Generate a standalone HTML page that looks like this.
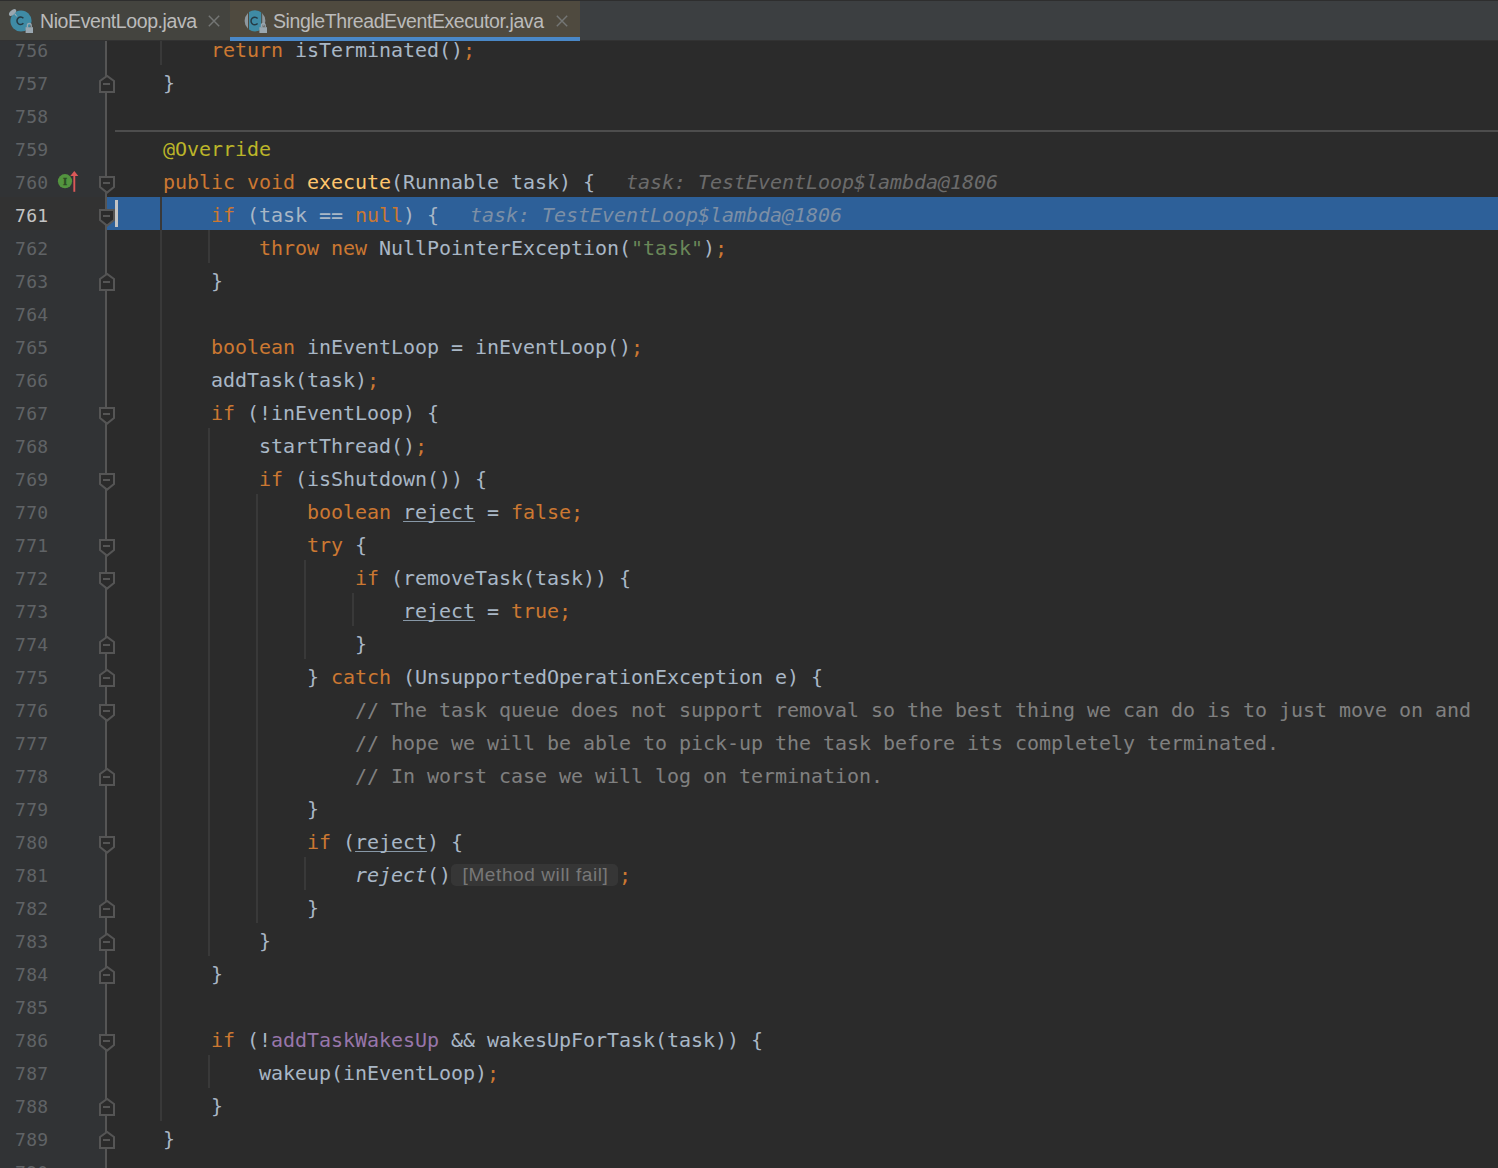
<!DOCTYPE html>
<html lang="en"><head><meta charset="utf-8"><title>SingleThreadEventExecutor.java</title>
<style>
html,body{margin:0;padding:0;}
body{width:1498px;height:1168px;overflow:hidden;background:#2b2b2b;position:relative;font-family:"DejaVu Sans Mono","Liberation Mono",monospace;}
#ed{position:absolute;left:0;top:0;width:1498px;height:1168px;overflow:hidden;}
#gutter{position:absolute;left:0;top:0;width:105px;height:1168px;background:#313335;}
#gcur{position:absolute;left:0;top:197px;width:105px;height:33px;background:#323232;}
#fline{position:absolute;left:105px;top:0;width:2px;height:1168px;background:#555555;}
#exec{position:absolute;left:107px;top:197px;width:1391px;height:33px;background:#2d6099;}
#caret{position:absolute;left:115px;top:200px;width:3px;height:27px;background:#c4c4c4;}
#sep{position:absolute;left:115px;top:130px;width:1383px;height:2px;background:#4d4d4d;}
.ln{position:absolute;left:15px;width:60px;height:33px;line-height:34px;font-size:18px;color:#606366;letter-spacing:0.3px;white-space:pre;}
.ln.cur{color:#c4c4c4;}
.r{position:absolute;height:33px;line-height:33px;font-size:20px;color:#a9b7c6;letter-spacing:-0.04px;white-space:pre;}
.k{color:#cc7832}.s{color:#6a8759}.c{color:#808080}.a{color:#bbb529}.m{color:#ffc66d}.f{color:#9876aa}
.u{text-decoration:underline;text-decoration-thickness:1px;text-underline-offset:1.5px;text-decoration-skip-ink:none;text-decoration-color:#8797a6;}
.h{color:#6b6b6b;font-style:italic;margin-left:31px;}
#r761 .h{color:#7c8fa6;}
.inl{display:inline-block;box-sizing:border-box;width:166.5px;height:21.5px;line-height:22.5px;margin:0 1.5px 0 0;padding-left:11.5px;vertical-align:baseline;background:#363636;border-radius:5px;color:#787878;font-family:"Liberation Sans","DejaVu Sans",sans-serif;font-size:19px;letter-spacing:0.6px;text-align:left;position:relative;top:-0.8px;font-style:normal;}
.g{position:absolute;width:2px;background:#393939;}
.fm{position:absolute;left:99px;width:16px;height:20px;}
#tabs{position:absolute;left:0;top:0;width:1498px;height:41px;background:#3c3f41;font-family:"Liberation Sans","DejaVu Sans",sans-serif;font-size:19.5px;color:#bbbbbb;letter-spacing:-0.41px;}
#tabs .topl{position:absolute;left:0;top:0;width:1498px;height:1px;background:#2e2e2e;}
#tabs .botl{position:absolute;left:0;top:40px;width:1498px;height:1px;background:#323232;}
.tab{position:absolute;top:1px;height:39px;}
.tab .tx{position:absolute;top:0;height:39px;line-height:41px;white-space:pre;}
#t1{left:0;width:230px;background:#44443f;}
#t2{left:230px;width:350px;background:#4f4a3f;}
#t2u{position:absolute;left:230px;top:37px;width:350px;height:4px;background:#4a88c7;}
.x{position:absolute;top:14px;width:12px;height:12px;}
.ic{position:absolute;top:0;}
</style></head><body><div id="ed">
<div id="gutter"></div><div id="gcur"></div>
<div id="exec"></div>
<div id="sep"></div>

<div class="g" style="left:160px;top:32px;height:33px"></div>
<div class="g" style="left:160px;top:197px;height:924px"></div>
<div class="g" style="left:208px;top:230px;height:33px"></div>
<div class="g" style="left:208px;top:428px;height:528px"></div>
<div class="g" style="left:208px;top:1055px;height:33px"></div>
<div class="g" style="left:256px;top:494px;height:429px"></div>
<div class="g" style="left:304px;top:560px;height:99px"></div>
<div class="g" style="left:304px;top:857px;height:33px"></div>
<div class="g" style="left:352px;top:593px;height:33px"></div>
<div id="fline"></div>
<svg class="fm" style="top:176px" viewBox="0 0 16 20"><path d="M1 1H15V11L8 16.6L1 11Z" fill="#2b2b2b" stroke="#555555" stroke-width="2"/><rect x="4" y="6" width="7" height="2" fill="#555555"/></svg>
<svg class="fm" style="top:209px" viewBox="0 0 16 20"><path d="M1 1H15V11L8 16.6L1 11Z" fill="#2b2b2b" stroke="#555555" stroke-width="2"/><rect x="4" y="6" width="7" height="2" fill="#555555"/></svg>
<svg class="fm" style="top:407px" viewBox="0 0 16 20"><path d="M1 1H15V11L8 16.6L1 11Z" fill="#2b2b2b" stroke="#555555" stroke-width="2"/><rect x="4" y="6" width="7" height="2" fill="#555555"/></svg>
<svg class="fm" style="top:473px" viewBox="0 0 16 20"><path d="M1 1H15V11L8 16.6L1 11Z" fill="#2b2b2b" stroke="#555555" stroke-width="2"/><rect x="4" y="6" width="7" height="2" fill="#555555"/></svg>
<svg class="fm" style="top:539px" viewBox="0 0 16 20"><path d="M1 1H15V11L8 16.6L1 11Z" fill="#2b2b2b" stroke="#555555" stroke-width="2"/><rect x="4" y="6" width="7" height="2" fill="#555555"/></svg>
<svg class="fm" style="top:572px" viewBox="0 0 16 20"><path d="M1 1H15V11L8 16.6L1 11Z" fill="#2b2b2b" stroke="#555555" stroke-width="2"/><rect x="4" y="6" width="7" height="2" fill="#555555"/></svg>
<svg class="fm" style="top:704px" viewBox="0 0 16 20"><path d="M1 1H15V11L8 16.6L1 11Z" fill="#2b2b2b" stroke="#555555" stroke-width="2"/><rect x="4" y="6" width="7" height="2" fill="#555555"/></svg>
<svg class="fm" style="top:836px" viewBox="0 0 16 20"><path d="M1 1H15V11L8 16.6L1 11Z" fill="#2b2b2b" stroke="#555555" stroke-width="2"/><rect x="4" y="6" width="7" height="2" fill="#555555"/></svg>
<svg class="fm" style="top:1034px" viewBox="0 0 16 20"><path d="M1 1H15V11L8 16.6L1 11Z" fill="#2b2b2b" stroke="#555555" stroke-width="2"/><rect x="4" y="6" width="7" height="2" fill="#555555"/></svg>
<svg class="fm" style="top:74px" viewBox="0 0 16 20"><path d="M8 1.9L15 7V17.9H1V7Z" fill="#2b2b2b" stroke="#555555" stroke-width="2"/><rect x="4" y="9" width="7" height="2" fill="#555555"/></svg>
<svg class="fm" style="top:272px" viewBox="0 0 16 20"><path d="M8 1.9L15 7V17.9H1V7Z" fill="#2b2b2b" stroke="#555555" stroke-width="2"/><rect x="4" y="9" width="7" height="2" fill="#555555"/></svg>
<svg class="fm" style="top:635px" viewBox="0 0 16 20"><path d="M8 1.9L15 7V17.9H1V7Z" fill="#2b2b2b" stroke="#555555" stroke-width="2"/><rect x="4" y="9" width="7" height="2" fill="#555555"/></svg>
<svg class="fm" style="top:668px" viewBox="0 0 16 20"><path d="M8 1.9L15 7V17.9H1V7Z" fill="#2b2b2b" stroke="#555555" stroke-width="2"/><rect x="4" y="9" width="7" height="2" fill="#555555"/></svg>
<svg class="fm" style="top:767px" viewBox="0 0 16 20"><path d="M8 1.9L15 7V17.9H1V7Z" fill="#2b2b2b" stroke="#555555" stroke-width="2"/><rect x="4" y="9" width="7" height="2" fill="#555555"/></svg>
<svg class="fm" style="top:899px" viewBox="0 0 16 20"><path d="M8 1.9L15 7V17.9H1V7Z" fill="#2b2b2b" stroke="#555555" stroke-width="2"/><rect x="4" y="9" width="7" height="2" fill="#555555"/></svg>
<svg class="fm" style="top:932px" viewBox="0 0 16 20"><path d="M8 1.9L15 7V17.9H1V7Z" fill="#2b2b2b" stroke="#555555" stroke-width="2"/><rect x="4" y="9" width="7" height="2" fill="#555555"/></svg>
<svg class="fm" style="top:965px" viewBox="0 0 16 20"><path d="M8 1.9L15 7V17.9H1V7Z" fill="#2b2b2b" stroke="#555555" stroke-width="2"/><rect x="4" y="9" width="7" height="2" fill="#555555"/></svg>
<svg class="fm" style="top:1097px" viewBox="0 0 16 20"><path d="M8 1.9L15 7V17.9H1V7Z" fill="#2b2b2b" stroke="#555555" stroke-width="2"/><rect x="4" y="9" width="7" height="2" fill="#555555"/></svg>
<svg class="fm" style="top:1130px" viewBox="0 0 16 20"><path d="M8 1.9L15 7V17.9H1V7Z" fill="#2b2b2b" stroke="#555555" stroke-width="2"/><rect x="4" y="9" width="7" height="2" fill="#555555"/></svg>
<div class="ln" style="top:34px">756</div>
<div class="ln" style="top:67px">757</div>
<div class="ln" style="top:100px">758</div>
<div class="ln" style="top:133px">759</div>
<div class="ln" style="top:166px">760</div>
<div class="ln cur" style="top:199px">761</div>
<div class="ln" style="top:232px">762</div>
<div class="ln" style="top:265px">763</div>
<div class="ln" style="top:298px">764</div>
<div class="ln" style="top:331px">765</div>
<div class="ln" style="top:364px">766</div>
<div class="ln" style="top:397px">767</div>
<div class="ln" style="top:430px">768</div>
<div class="ln" style="top:463px">769</div>
<div class="ln" style="top:496px">770</div>
<div class="ln" style="top:529px">771</div>
<div class="ln" style="top:562px">772</div>
<div class="ln" style="top:595px">773</div>
<div class="ln" style="top:628px">774</div>
<div class="ln" style="top:661px">775</div>
<div class="ln" style="top:694px">776</div>
<div class="ln" style="top:727px">777</div>
<div class="ln" style="top:760px">778</div>
<div class="ln" style="top:793px">779</div>
<div class="ln" style="top:826px">780</div>
<div class="ln" style="top:859px">781</div>
<div class="ln" style="top:892px">782</div>
<div class="ln" style="top:925px">783</div>
<div class="ln" style="top:958px">784</div>
<div class="ln" style="top:991px">785</div>
<div class="ln" style="top:1024px">786</div>
<div class="ln" style="top:1057px">787</div>
<div class="ln" style="top:1090px">788</div>
<div class="ln" style="top:1123px">789</div>
<div class="ln" style="top:1156px">790</div>
<svg style="position:absolute;left:56px;top:168px;width:26px;height:26px" viewBox="0 0 26 26"><circle cx="9" cy="13.2" r="7.1" fill="#53943f"/><text x="9" y="16.9" text-anchor="middle" font-family="'Liberation Serif','DejaVu Serif',serif" font-weight="bold" font-size="10.5" fill="#2c4a25" stroke="#2c4a25" stroke-width="0.4">I</text><path d="M18.3 23.8V6" stroke="#db5858" stroke-width="1.9" fill="none"/><path d="M14.3 7.9L18.3 3L22.3 7.9Z" fill="#db5858"/></svg>
<div class="r" id="r756" style="left:211px;top:34px"><span class="k">return</span> isTerminated()<span class="k">;</span></div>
<div class="r" id="r757" style="left:163px;top:67px">}</div>
<div class="r" id="r759" style="left:163px;top:133px"><span class="a">@Override</span></div>
<div class="r" id="r760" style="left:163px;top:166px"><span class="k">public void</span> <span class="m">execute</span>(Runnable task) {<span class="h">task: TestEventLoop$lambda@1806</span></div>
<div class="r" id="r761" style="left:211px;top:199px"><span class="k">if</span> (task == <span class="k">null</span>) {<span class="h">task: TestEventLoop$lambda@1806</span></div>
<div class="r" id="r762" style="left:259px;top:232px"><span class="k">throw new</span> NullPointerException(<span class="s">&quot;task&quot;</span>)<span class="k">;</span></div>
<div class="r" id="r763" style="left:211px;top:265px">}</div>
<div class="r" id="r765" style="left:211px;top:331px"><span class="k">boolean</span> inEventLoop = inEventLoop()<span class="k">;</span></div>
<div class="r" id="r766" style="left:211px;top:364px">addTask(task)<span class="k">;</span></div>
<div class="r" id="r767" style="left:211px;top:397px"><span class="k">if</span> (!inEventLoop) {</div>
<div class="r" id="r768" style="left:259px;top:430px">startThread()<span class="k">;</span></div>
<div class="r" id="r769" style="left:259px;top:463px"><span class="k">if</span> (isShutdown()) {</div>
<div class="r" id="r770" style="left:307px;top:496px"><span class="k">boolean</span> <span class="u">reject</span> = <span class="k">false;</span></div>
<div class="r" id="r771" style="left:307px;top:529px"><span class="k">try</span> {</div>
<div class="r" id="r772" style="left:355px;top:562px"><span class="k">if</span> (removeTask(task)) {</div>
<div class="r" id="r773" style="left:403px;top:595px"><span class="u">reject</span> = <span class="k">true;</span></div>
<div class="r" id="r774" style="left:355px;top:628px">}</div>
<div class="r" id="r775" style="left:307px;top:661px">} <span class="k">catch</span> (UnsupportedOperationException e) {</div>
<div class="r" id="r776" style="left:355px;top:694px"><span class="c">// The task queue does not support removal so the best thing we can do is to just move on and</span></div>
<div class="r" id="r777" style="left:355px;top:727px"><span class="c">// hope we will be able to pick-up the task before its completely terminated.</span></div>
<div class="r" id="r778" style="left:355px;top:760px"><span class="c">// In worst case we will log on termination.</span></div>
<div class="r" id="r779" style="left:307px;top:793px">}</div>
<div class="r" id="r780" style="left:307px;top:826px"><span class="k">if</span> (<span class="u">reject</span>) {</div>
<div class="r" id="r781" style="left:355px;top:859px"><i>reject</i>()<span class="inl">[Method will fail]</span><span class="k">;</span></div>
<div class="r" id="r782" style="left:307px;top:892px">}</div>
<div class="r" id="r783" style="left:259px;top:925px">}</div>
<div class="r" id="r784" style="left:211px;top:958px">}</div>
<div class="r" id="r786" style="left:211px;top:1024px"><span class="k">if</span> (!<span class="f">addTaskWakesUp</span> &amp;&amp; wakesUpForTask(task)) {</div>
<div class="r" id="r787" style="left:259px;top:1057px">wakeup(inEventLoop)<span class="k">;</span></div>
<div class="r" id="r788" style="left:211px;top:1090px">}</div>
<div class="r" id="r789" style="left:163px;top:1123px">}</div>
<div id="caret"></div>
<div id="tabs"><div class="tab" id="t1"><svg class="ic" style="left:6px" width="32" height="40" viewBox="0 0 32 40"><circle cx="15" cy="20" r="10.6" fill="#3f8ba5"/><path d="M17.4 17.3A3.7 3.7 0 1 0 17.4 22.3" fill="none" stroke="#263a44" stroke-width="1.5"/><ellipse cx="6.6" cy="11.5" rx="4.3" ry="2.3" transform="rotate(-42 6.6 11.5)" fill="#9aa7b0"/><path d="M8.4 13.6L11.8 16.6L9.6 12.4Z" fill="#9aa7b0"/><path d="M19.6 26.2H27V32H19.6Z" fill="#9aa7b0"/><path d="M21.4 26.4V24.4A1.9 1.9 0 0 1 25.2 24.4V26.4" fill="none" stroke="#9aa7b0" stroke-width="1.3"/></svg><span class="tx" style="left:40px">NioEventLoop.java</span><svg class="x" style="left:208px" viewBox="0 0 12 12"><path d="M0.8 0.8L11.2 11.2M11.2 0.8L0.8 11.2" stroke="#747675" stroke-width="1.45" fill="none"/></svg></div>
<div class="tab" id="t2"><svg class="ic" style="left:12px" width="32" height="40" viewBox="0 0 32 40"><defs><clipPath id="cpm"><rect x="7" y="8" width="12.2" height="24"/></clipPath><clipPath id="cpl"><rect x="0" y="8" width="6" height="24"/></clipPath><clipPath id="cpr"><rect x="20.2" y="8" width="8" height="24"/></clipPath></defs><circle cx="13" cy="19.8" r="10.6" fill="#3f8ba5" clip-path="url(#cpm)"/><circle cx="13" cy="19.8" r="10.4" fill="#8e989f" clip-path="url(#cpl)"/><circle cx="13" cy="19.8" r="10.4" fill="#8e989f" clip-path="url(#cpr)"/><path d="M15.6 17.4A3.8 3.8 0 1 0 15.6 22.6" fill="none" stroke="#263a44" stroke-width="1.5"/><path d="M17.4 26.2H25V32H17.4Z" fill="#9aa7b0"/><path d="M19.4 26.4V24.4A1.9 1.9 0 0 1 23.2 24.4V26.4" fill="none" stroke="#9aa7b0" stroke-width="1.3"/></svg><span class="tx" style="left:43px">SingleThreadEventExecutor.java</span><svg class="x" style="left:326px" viewBox="0 0 12 12"><path d="M0.8 0.8L11.2 11.2M11.2 0.8L0.8 11.2" stroke="#747675" stroke-width="1.45" fill="none"/></svg></div>
<div class="topl"></div><div class="botl"></div><div id="t2u"></div></div>
</div></body></html>
